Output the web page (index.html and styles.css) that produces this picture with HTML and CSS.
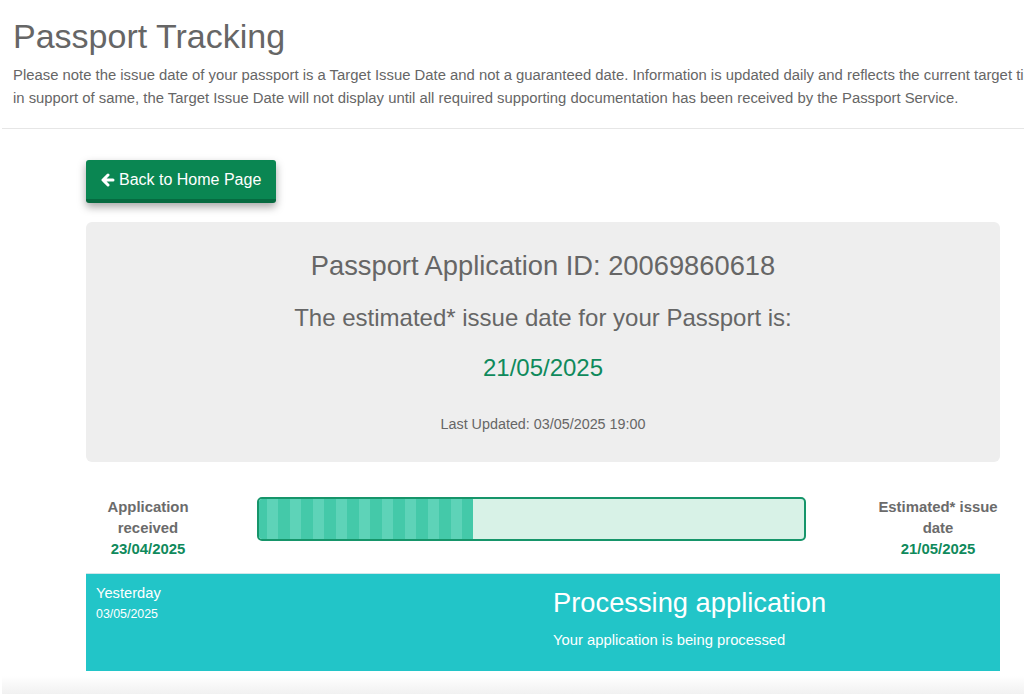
FILE: index.html
```html
<!DOCTYPE html>
<html lang="en">
<head>
    <meta charset="UTF-8">
    <meta name="viewport" content="width=device-width, initial-scale=1.0">
    <title>Passport Tracking</title>
    <link rel="stylesheet" href="styles.css">
</head>
<body>
<div class="page">
    <header class="intro">
        <h1>Passport Tracking</h1>
        <p>Please note the issue date of your passport is a Target Issue Date and not a guaranteed date. Information is updated daily and reflects the current target timeframes. Where documents are required<br>in support of same, the Target Issue Date will not display until all required supporting documentation has been received by the Passport Service.</p>
    </header>
    <hr class="divider">

    <main class="tracker">
        <a class="back-btn" href="#">
            <svg class="back-icon" viewBox="0 0 14 14" width="14" height="14">
                <path d="M7 2 L2 7 L7 12 M2.5 7 H12" fill="none" stroke="#fff" stroke-width="3" stroke-linecap="round" stroke-linejoin="round"/>
            </svg>
            Back to Home Page
        </a>

        <section class="summary">
            <h2 class="app-id">Passport Application ID: 20069860618</h2>
            <p class="est-label">The estimated* issue date for your Passport is:</p>
            <p class="est-date">21/05/2025</p>
            <p class="updated">Last Updated: 03/05/2025 19:00</p>
        </section>

        <section class="progress-row">
            <div class="milestone">
                Application<br>received
                <span class="milestone-date">23/04/2025</span>
            </div>
            <div class="bar">
                <div class="bar-fill" style="width: 39.3%"></div>
            </div>
            <div class="milestone">
                Estimated* issue<br>date
                <span class="milestone-date">21/05/2025</span>
            </div>
        </section>

        <section class="status">
            <div class="status-when">
                <div class="when-day">Yesterday</div>
                <div class="when-date">03/05/2025</div>
            </div>
            <div class="status-what">
                <h3>Processing application</h3>
                <p>Your application is being processed</p>
            </div>
        </section>
    </main>

    <footer class="page-foot"></footer>
</div>
</body>
</html>
```

FILE: styles.css
```css
html, body {
    margin: 0;
    overflow: hidden;
}
body {
    font-family: "Liberation Sans", Arial, sans-serif;
    color: #666666;
    background: #ffffff;
}
.page {
    width: 1086px;
}
.intro {
    padding: 18px 13px 0;
}
.intro h1 {
    margin: 0;
    font-size: 34px;
    font-weight: 400;
    line-height: 1.1;
    color: #666666;
}
.intro p {
    margin: 9px 0 0;
    font-size: 14.85px;
    line-height: 23px;
    white-space: nowrap;
}
.divider {
    margin: 18px 0 0 2px;
    border: 0;
    border-top: 1px solid #e6e6e6;
    height: 0;
}
.tracker {
    width: 914px;
    margin: 31px auto 0;
}
.back-btn {
    display: inline-flex;
    align-items: center;
    gap: 4px;
    height: 39px;
    padding: 0 15px;
    background: #0a8652;
    border-bottom: 4px solid #066a40;
    border-radius: 3px;
    color: #ffffff;
    font-size: 16px;
    text-decoration: none;
    box-shadow: 0 4px 8px rgba(0, 0, 0, 0.35);
}
.back-icon {
    display: block;
}
.summary {
    margin-top: 19px;
    background: #eeeeee;
    border-radius: 6px;
    padding: 29px 0 28px;
    text-align: center;
}
.summary p {
    margin: 0;
}
.app-id {
    margin: 0;
    font-size: 27.3px;
    font-weight: 400;
    line-height: 30px;
}
.est-label {
    margin-top: 24px !important;
    font-size: 24px;
    line-height: 26px;
}
.est-date {
    margin-top: 24px !important;
    font-size: 24px;
    line-height: 26px;
    color: #0f8a5c;
}
.updated {
    margin-top: 33px !important;
    font-size: 14.35px;
    line-height: 20px;
}
.progress-row {
    display: grid;
    grid-template-columns: 124px 1fr 124px;
    align-items: start;
    margin-top: 35px;
}
.milestone {
    text-align: center;
    font-size: 14.9px;
    font-weight: 700;
    line-height: 21px;
    color: #6b6b6b;
}
.milestone-date {
    display: block;
    color: #0f8a5c;
}
.bar {
    margin: 0 70px 0 47px;
    height: 40px;
    border: 2px solid #16956a;
    border-radius: 5px;
    background: #d8f2e7;
    overflow: hidden;
}
.bar-fill {
    height: 100%;
    background: repeating-linear-gradient(90deg, #44c9a9 0 12px, #5ed3b8 12px 23px);
    background-position: -4px 0;
}
.status {
    display: grid;
    grid-template-columns: 1fr 1fr;
    margin-top: 13px;
    height: 98px;
    background: #22c5c8;
    border-top: 1px solid #cfe6ea;
    box-sizing: border-box;
    color: #ffffff;
}
.status-when {
    padding: 9px 10px 0;
}
.when-day {
    font-size: 14.7px;
    line-height: 20px;
}
.when-date {
    font-size: 12.4px;
    line-height: 22px;
}
.status-what {
    padding: 14px 10px 0;
}
.status-what h3 {
    margin: 0;
    font-size: 27.3px;
    font-weight: 400;
    line-height: 30px;
}
.status-what p {
    margin: 12px 0 0;
    font-size: 14.8px;
    line-height: 20px;
}
.page-foot {
    margin: 5px 0 0 2px;
    height: 22px;
    background: linear-gradient(#ffffff, #eeeeee);
}
```
